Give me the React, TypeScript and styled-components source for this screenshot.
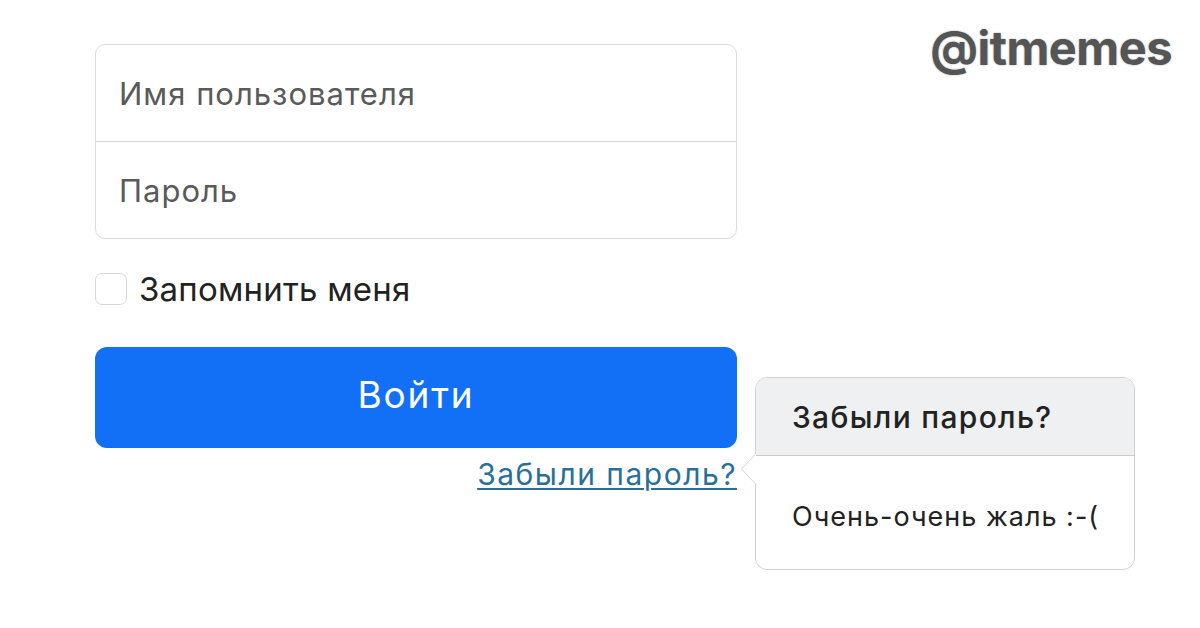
import React from "react";
import styled, { createGlobalStyle } from "styled-components";

const GlobalStyle = createGlobalStyle`
  html, body {
    margin: 0;
    padding: 0;
    background: #ffffff;
    font-family: Inter, "Liberation Sans", Arial, sans-serif;
  }
`;

const Page = styled.div`
  width: 1200px;
  height: 628px;
  position: relative;
  overflow: hidden;
  background: #ffffff;
`;

const Watermark = styled.div`
  position: absolute;
  top: 19px;
  right: 28px;
  font-weight: 700;
  font-size: 47px;
  letter-spacing: -0.5px;
  color: #555555;
  text-shadow: 0 0 2px rgba(80, 80, 80, 0.5);
`;

const Form = styled.div`
  width: 642px;
  padding: 44px 0 0 95px;
  display: flex;
  flex-direction: column;
`;

const InputGroup = styled.div`
  border: 1px solid #d8dcdf;
  border-radius: 10px;
  display: flex;
  flex-direction: column;
`;

const Field = styled.div<{ $last?: boolean }>`
  height: 96px;
  display: flex;
  align-items: center;
  padding-left: 23px;
  font-size: 31px;
  letter-spacing: 1px;
  color: #5a5a5a;
  border-bottom: ${(p) => (p.$last ? "none" : "1px solid #d3d7da")};
`;

const CheckRow = styled.label`
  display: flex;
  align-items: center;
  gap: 12px;
  margin-top: 30px;
  font-size: 33px;
  letter-spacing: 0.2px;
  color: #222222;
`;

const Box = styled.span`
  width: 32px;
  height: 32px;
  border: 1px solid #d5d7da;
  border-radius: 7px;
  box-sizing: border-box;
`;

const Button = styled.button`
  margin-top: 38px;
  height: 101px;
  border: none;
  border-radius: 12px;
  background: #1170f5;
  color: #ffffff;
  font-family: Inter, "Liberation Sans", Arial, sans-serif;
  font-size: 37px;
  letter-spacing: 1.8px;
  padding-bottom: 8px;
`;

const LinkRow = styled.div`
  display: flex;
  justify-content: flex-end;
  margin-top: 8px;
`;

const ForgotLink = styled.a`
  font-size: 30px;
  letter-spacing: 1.5px;
  color: #2a6f97;
  text-decoration: underline;
  text-decoration-thickness: 2px;
  text-underline-offset: 3px;
`;

const Popover = styled.div`
  position: absolute;
  left: 755px;
  top: 377px;
  width: 380px;
  height: 193px;
  box-sizing: border-box;
  border: 1px solid #cfd2d5;
  border-radius: 12px;
  background: #ffffff;
  display: flex;
  flex-direction: column;
`;

const PopHeader = styled.div`
  height: 77px;
  background: #eff0f2;
  border-bottom: 1px solid #c8cbcf;
  border-radius: 11px 11px 0 0;
  display: flex;
  align-items: center;
  padding-left: 36px;
  font-size: 30px;
  font-weight: 500;
  letter-spacing: 1.3px;
  color: #222222;
`;

const PopBody = styled.div`
  flex: 1;
  display: flex;
  align-items: center;
  padding-left: 36px;
  padding-top: 8px;
  font-size: 27px;
  letter-spacing: 1px;
  color: #222222;
`;

const Arrow = styled.div`
  position: absolute;
  left: -15px;
  top: 75px;
  width: 0;
  height: 0;
  border-top: 16px solid transparent;
  border-bottom: 16px solid transparent;
  border-right: 15px solid #cfd2d5;

  &::after {
    content: "";
    position: absolute;
    left: 1px;
    top: -15px;
    border-top: 15px solid transparent;
    border-bottom: 15px solid transparent;
    border-right: 14px solid #ffffff;
  }
`;

export default function App() {
  return (
    <Page>
      <GlobalStyle />
      <Watermark>@itmemes</Watermark>
      <Form>
        <InputGroup>
          <Field>Имя пользователя</Field>
          <Field $last>Пароль</Field>
        </InputGroup>
        <CheckRow>
          <Box />
          Запомнить меня
        </CheckRow>
        <Button>Войти</Button>
        <LinkRow>
          <ForgotLink href="#">Забыли пароль?</ForgotLink>
        </LinkRow>
      </Form>
      <Popover>
        <Arrow />
        <PopHeader>Забыли пароль?</PopHeader>
        <PopBody>Очень-очень жаль :-(</PopBody>
      </Popover>
    </Page>
  );
}
